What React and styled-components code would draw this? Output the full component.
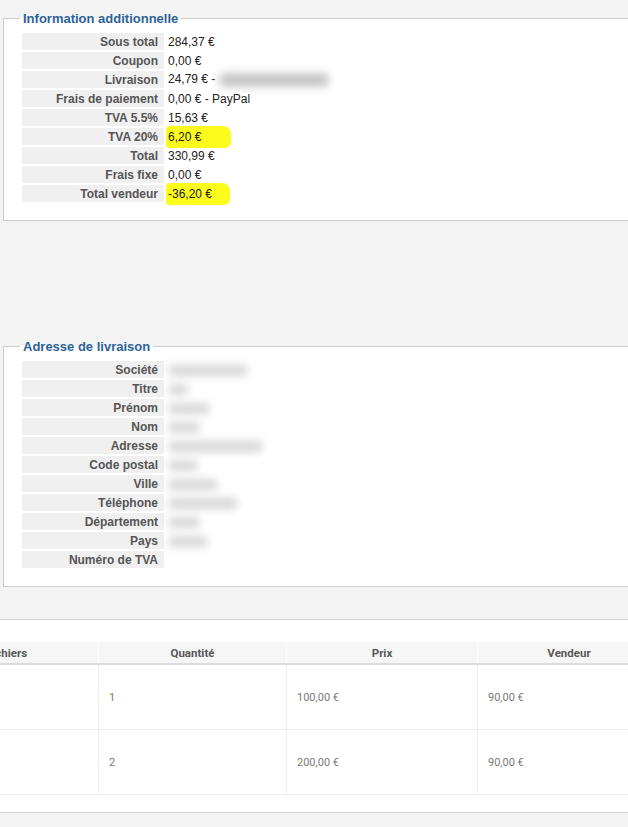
import React from 'react';
import styled, {createGlobalStyle} from 'styled-components';

const GlobalStyle = createGlobalStyle`
  html, body {
    margin: 0;
    padding: 0;
    background: #f3f3f3;
    overflow: hidden;
  }
  body {
    font-family: "Liberation Sans", Arial, sans-serif;
  }
`;

const Page = styled.div`
  width: 760px;
  padding-top: 11px;
`;

const Box = styled.fieldset`
  margin: ${props => props.$top || 0}px 0 0 3px;
  padding: 5px 16px 16px 16px;
  border: 1px solid #cccccc;
  background: #ffffff;
  min-width: 0;
`;

const Legend = styled.legend`
  padding: 0 3px;
  font-size: 13px;
  line-height: 15px;
  font-weight: bold;
  color: #2e6197;
`;

const InfoTable = styled.table`
  border-collapse: separate;
  border-spacing: 2px;
  font-size: 12px;
`;

const Label = styled.th`
  width: 136px;
  height: 17px;
  padding: 0 6px 0 0;
  background: #f0f0f0;
  color: #555555;
  font-weight: bold;
  text-align: right;
  white-space: nowrap;
`;

const Value = styled.td`
  height: 17px;
  padding: 0 0 0 2px;
  color: #222222;
  white-space: nowrap;
`;

const Marked = styled.span`
  position: relative;
  z-index: 0;
  &::before {
    content: '';
    position: absolute;
    z-index: -1;
    left: -2px;
    right: -${props => props.$tail || 12}px;
    top: -4px;
    bottom: -4px;
    background: #fbfb1c;
    border-radius: 4px 8px 6px 3px;
  }
`;

const Hidden = styled.span`
  display: inline-block;
  vertical-align: middle;
  width: ${props => props.$w}px;
  height: ${props => props.$h || 11}px;
  background: ${props => props.$tone || '#d6d6d6'};
  border-radius: 6px;
  filter: blur(4px);
`;

const Panel = styled.div`
  margin-top: 32px;
  padding: 22px 0 17px;
  background: #ffffff;
  border-top: 1px solid #cfcfcf;
  border-bottom: 1px solid #cfcfcf;
  overflow: hidden;
`;

const Grid = styled.table`
  margin-left: -86px;
  border-collapse: collapse;
  font-family: Roboto, "Liberation Sans", sans-serif;
  font-size: 11px;
  border-bottom: 1px solid #eeeeee;
`;

const Head = styled.th`
  width: ${props => props.$w}px;
  height: 21px;
  padding: 0;
  background: #f6f6f6;
  color: #585858;
  font-weight: 700;
  font-size: 11.5px;
  text-align: center;
  border-left: 1px solid #fdfdfd;
  border-bottom: 2px solid #dcdcdc;
`;

const Cell = styled.td`
  height: 64px;
  padding: 0 0 0 10px;
  color: #7a7a7a;
  border-left: 1px solid #eeeeee;
  border-top: 1px solid #eeeeee;
  &:first-child {
    border-left: none;
  }
`;

const totals = [
  ['Sous total', '284,37 €'],
  ['Coupon', '0,00 €'],
  ['Livraison', 'shipping'],
  ['Frais de paiement', '0,00 € - PayPal'],
  ['TVA 5.5%', '15,63 €'],
  ['TVA 20%', '6,20 €', 30],
  ['Total', '330,99 €'],
  ['Frais fixe', '0,00 €'],
  ['Total vendeur', '-36,20 €', 18],
];

const address = [
  ['Société', 80],
  ['Titre', 20],
  ['Prénom', 42],
  ['Nom', 32],
  ['Adresse', 95],
  ['Code postal', 30],
  ['Ville', 50],
  ['Téléphone', 70],
  ['Département', 32],
  ['Pays', 40],
  ['Numéro de TVA', 0],
];

const lines = [
  {qty: '1', price: '100,00 €', seller: '90,00 €'},
  {qty: '2', price: '200,00 €', seller: '90,00 €'},
];

const renderTotal = ([label, value, tail]) => {
  let content = value;
  if (value === 'shipping') {
    content = (
      <>
        24,79 € - <Hidden $w={110} $h={14} $tone="#c6c6c6" />
      </>
    );
  } else if (tail) {
    content = <Marked $tail={tail}>{value}</Marked>;
  }
  return (
    <tr key={label}>
      <Label>{label}</Label>
      <Value>{content}</Value>
    </tr>
  );
};

export default function App() {
  return (
    <Page>
      <GlobalStyle />
      <Box>
        <Legend>Information additionnelle</Legend>
        <InfoTable>
          <tbody>{totals.map(renderTotal)}</tbody>
        </InfoTable>
      </Box>

      <Box $top={118}>
        <Legend>Adresse de livraison</Legend>
        <InfoTable>
          <tbody>
            {address.map(([label, width]) => (
              <tr key={label}>
                <Label>{label}</Label>
                <Value>{width > 0 && <Hidden $w={width} />}</Value>
              </tr>
            ))}
          </tbody>
        </InfoTable>
      </Box>

      <Panel>
        <Grid>
          <thead>
            <tr>
              <Head $w={183}>Fichiers</Head>
              <Head $w={187}>Quantité</Head>
              <Head $w={190}>Prix</Head>
              <Head $w={182}>Vendeur</Head>
            </tr>
          </thead>
          <tbody>
            {lines.map((line, index) => (
              <tr key={index}>
                <Cell />
                <Cell>{line.qty}</Cell>
                <Cell>{line.price}</Cell>
                <Cell>{line.seller}</Cell>
              </tr>
            ))}
          </tbody>
        </Grid>
      </Panel>
    </Page>
  );
}
